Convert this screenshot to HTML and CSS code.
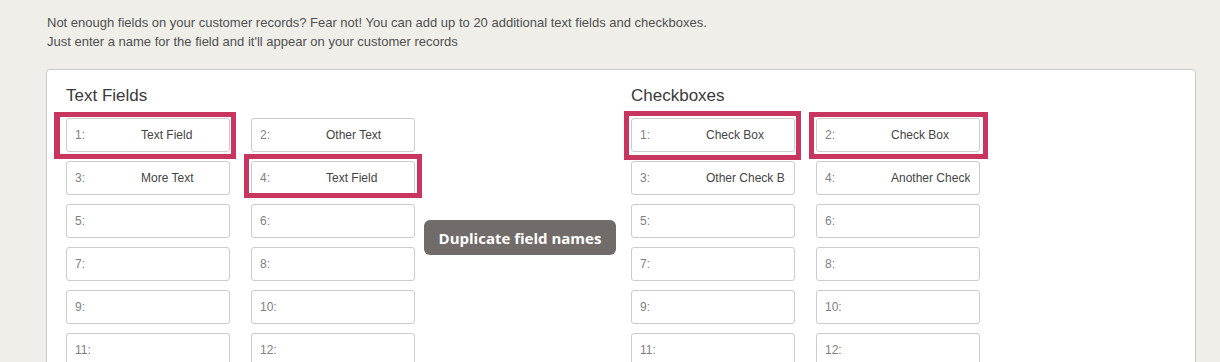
FILE: index.html
```html
<!DOCTYPE html>
<html lang="en">
<head>
    <meta charset="UTF-8">
    <meta name="viewport" content="width=device-width, initial-scale=1.0">
    <title>Custom Fields</title>
    <link rel="stylesheet" href="styles.css">
</head>
<body>

<!-- Intro text -->
<p class="intro">
    Not enough fields on your customer records? Fear not! You can add up to 20 additional text fields and checkboxes.<br>
    Just enter a name for the field and it'll appear on your customer records
</p>

<!-- Custom fields panel -->
<div class="panel">
    <section class="group">
        <h2>Text Fields</h2>
        <div class="fields">
            <label class="field flag flag-a"><span class="num">1:</span><input type="text" value="Text Field"></label>
            <label class="field"><span class="num">2:</span><input type="text" value="Other Text"></label>
            <label class="field"><span class="num">3:</span><input type="text" value="More Text"></label>
            <label class="field flag flag-b"><span class="num">4:</span><input type="text" value="Text Field"></label>
            <label class="field"><span class="num">5:</span><input type="text"></label>
            <label class="field"><span class="num">6:</span><input type="text"></label>
            <label class="field"><span class="num">7:</span><input type="text"></label>
            <label class="field"><span class="num">8:</span><input type="text"></label>
            <label class="field"><span class="num">9:</span><input type="text"></label>
            <label class="field"><span class="num">10:</span><input type="text"></label>
            <label class="field"><span class="num">11:</span><input type="text"></label>
            <label class="field"><span class="num">12:</span><input type="text"></label>
        </div>
    </section>

    <section class="group">
        <h2>Checkboxes</h2>
        <div class="fields">
            <label class="field flag flag-c"><span class="num">1:</span><input type="text" value="Check Box"></label>
            <label class="field flag flag-d"><span class="num">2:</span><input type="text" value="Check Box"></label>
            <label class="field"><span class="num">3:</span><input type="text" value="Other Check Box"></label>
            <label class="field"><span class="num">4:</span><input type="text" value="Another Check"></label>
            <label class="field"><span class="num">5:</span><input type="text"></label>
            <label class="field"><span class="num">6:</span><input type="text"></label>
            <label class="field"><span class="num">7:</span><input type="text"></label>
            <label class="field"><span class="num">8:</span><input type="text"></label>
            <label class="field"><span class="num">9:</span><input type="text"></label>
            <label class="field"><span class="num">10:</span><input type="text"></label>
            <label class="field"><span class="num">11:</span><input type="text"></label>
            <label class="field"><span class="num">12:</span><input type="text"></label>
        </div>
    </section>

    <!-- Warning bubble -->
    <div class="tip">Duplicate field names</div>
</div>

</body>
</html>
```

FILE: styles.css
```css
html, body {
    height: 100%;
    overflow: hidden;
}

body {
    font-family: 'Liberation Sans', Arial, sans-serif;
    margin: 0;
    padding: 0;
    background-color: #efeee9;
    color: #444;
}

/* Intro text */
.intro {
    margin: 0;
    padding: 13px 0 0 47px;
    font-size: 13px;
    line-height: 19px;
    color: #505050;
}

/* Panel */
.panel {
    position: relative;
    margin: 18px 0 0 46px;
    width: 1150px;
    height: 400px;
    background-color: #fff;
    border: 1px solid #cacaca;
    border-radius: 4px;
    padding: 16px 0 0 19px;
    box-sizing: border-box;
    display: grid;
    grid-template-columns: 565px auto;
    align-items: start;
}

.group h2 {
    margin: 0 0 12px;
    font-size: 17px;
    font-weight: normal;
    line-height: 20px;
    color: #3a3a3a;
}

.fields {
    display: grid;
    grid-template-columns: repeat(2, 164px);
    column-gap: 21px;
    row-gap: 9px;
}

/* Field rows */
.field {
    position: relative;
    display: flex;
    align-items: center;
    height: 34px;
    box-sizing: border-box;
    border: 1px solid #ccc;
    border-radius: 3px;
    font-size: 12px;
}

.field .num {
    width: 66px;
    padding-left: 8px;
    color: #808080;
    flex-shrink: 0;
}

.field input {
    flex: 1;
    min-width: 0;
    margin-right: 9px;
    padding: 0;
    border: none;
    background: transparent;
    font-family: inherit;
    font-size: 12px;
    color: #444;
    outline: none;
}

/* Red callout boxes */
.flag::after {
    content: "";
    position: absolute;
    border: 5px solid #c8365f;
    pointer-events: none;
}

.flag-a::after {
    top: -7px;
    left: -13px;
    right: -7px;
    bottom: -8px;
    border-left-width: 6px;
}

.flag-b::after {
    top: -8px;
    left: -8px;
    right: -8px;
    bottom: -4px;
}

.flag-c::after {
    top: -8px;
    left: -8px;
    right: -7px;
    bottom: -9px;
}

.flag-d::after {
    top: -7px;
    left: -8px;
    right: -9px;
    bottom: -8px;
}

/* Tooltip */
.tip {
    position: absolute;
    left: 377px;
    top: 150px;
    width: 192px;
    height: 35px;
    display: flex;
    align-items: center;
    justify-content: center;
    background-color: #716b69;
    border-radius: 6px;
    color: #fff;
    font-family: 'Open Sans', sans-serif;
    font-size: 15px;
    font-weight: bold;
}
```
